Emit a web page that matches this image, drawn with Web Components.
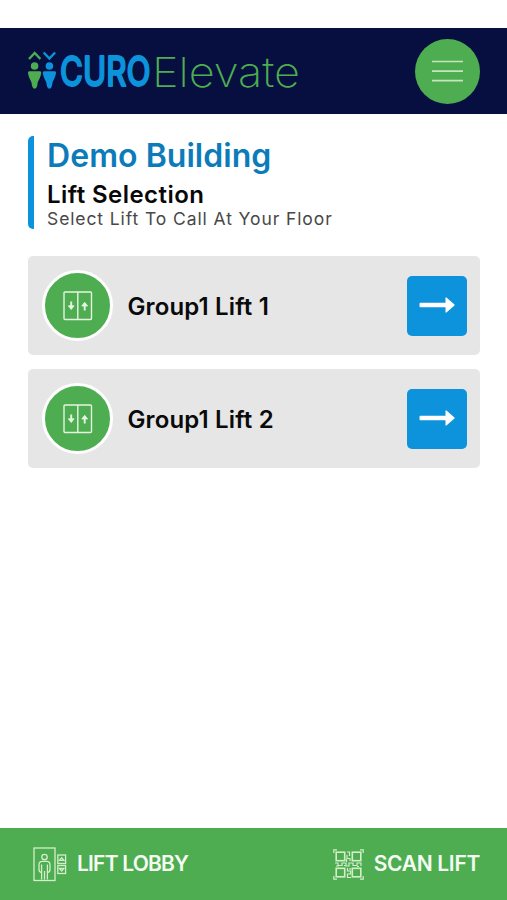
<!DOCTYPE html>
<html lang="en">
<head>
<meta charset="utf-8">
<title>CUROElevate</title>
<style>
  :root {
    --navy: #060f3f;
    --green: #4dad50;
    --blue: #0c93dc;
    --card: #e6e6e6;
  }
  body {
    margin: 0;
    background: #fff;
    font-family: Inter, "Liberation Sans", sans-serif;
  }
</style>
</head>
<body>
<lift-app></lift-app>
<script>
class BrandLogo extends HTMLElement {
    constructor() {
        super();
        this.attachShadow({ mode: 'open' });
        this.shadowRoot.innerHTML = `
        <style>
          :host { display: block; width: 274px; height: 66px; }
          svg { display: block; overflow: visible; }
          .curo { font: 500 41px Inter, sans-serif; fill: var(--blue); stroke: var(--blue); stroke-width: 1.8; stroke-linejoin: round; }
          .elevate { font: 200 41px Inter, sans-serif; fill: var(--green); }
        </style>
        <svg width="274" height="66" viewBox="28 38 274 66">
          <g fill="none" stroke-width="2.4">
            <path d="M29 59l5.7-6 5.7 6" stroke="#4dad50"/>
            <path d="M43.7 52.5l5.7 6 5.7-6" stroke="#0c93dc"/>
          </g>
          <g fill="#4dad50">
            <circle cx="34.6" cy="66" r="3.8"/>
            <path d="M29.2 71.2h10.8q1.5 0 1.2 1.8c-.5 4-2.3 6.5-3.5 9.5-.4 3.8-1.200 6.200-3.100 6.200s-2.700-2.400-3.100-6.200c-1.200-3-3-5.500-3.500-9.500q-.3-1.800 1.200-1.800z"/>
          </g>
          <g fill="#0c93dc">
            <circle cx="49.4" cy="66" r="3.8"/>
            <path d="M44 71.2h10.8q1.5 0 1.2 1.8c-.5 4-2.3 6.5-3.5 9.5-.4 3.8-1.200 6.200-3.100 6.200s-2.700-2.400-3.100-6.200c-1.200-3-3-5.500-3.500-9.500q-.3-1.800 1.200-1.800z"/>
          </g>
          <text class="curo" transform="translate(60 86) scale(.765 1)">CURO</text>
          <text class="elevate" x="152" y="86.500" textLength="148" lengthAdjust="spacingAndGlyphs">Elevate</text>
        </svg>
        `;
    }
}
customElements.define('brand-logo', BrandLogo);

class AppHeader extends HTMLElement {
    constructor() {
        super();
        this.attachShadow({ mode: 'open' });
        this.shadowRoot.innerHTML = `
        <style>
          :host {
            display: flex;
            align-items: center;
            justify-content: space-between;
            box-sizing: border-box;
            height: 86px;
            margin-top: 28px;
            padding: 0 27px 0 28px;
            background: var(--navy);
          }
          button {
            display: flex;
            align-items: center;
            justify-content: center;
            width: 65px;
            height: 65px;
            padding: 0;
            border: 0;
            border-radius: 50%;
            background: var(--green);
          }
        </style>
        <slot></slot>
        <button aria-label="Menu">
          <svg width="31" height="24" viewBox="0 0 31 24" stroke="#c5e6bd" stroke-width="1.700">
            <path d="M0 2.500h31M0 12.100h31M0 21.700h31"/>
          </svg>
        </button>
        `;
    }
}
customElements.define('app-header', AppHeader);

class PageHeading extends HTMLElement {
    constructor() {
        super();
        this.attachShadow({ mode: 'open' });
        this.shadowRoot.innerHTML = `
        <style>
          :host { display: flex; gap: 13.5px; height: 93px; margin: 22px 27px 0 28px; }
          .bar { width: 5.5px; border-radius: 5px 0 0 5px; background: var(--blue); }
          .text { white-space: nowrap; }
          h1, h2, p { margin: 0; }
          h1 { font-size: 32px; line-height: 39px; font-weight: 600; letter-spacing: .05px; color: #0b7cb9; }
          h2 { margin-top: 6px; font-size: 24px; line-height: 28px; font-weight: 600; letter-spacing: .45px; color: #080808; }
          p { font-size: 17.5px; line-height: 20px; letter-spacing: .9px; color: #484848; }
        </style>
        <div class="bar"></div>
        <div class="text">
          <h1><slot name="title"></slot></h1>
          <h2><slot name="subtitle"></slot></h2>
          <p><slot name="hint"></slot></p>
        </div>
        `;
    }
}
customElements.define('page-heading', PageHeading);

class LiftCard extends HTMLElement {
    constructor() {
        super();
        this.attachShadow({ mode: 'open' });
        this.shadowRoot.innerHTML = `
        <style>
          :host {
            display: flex;
            align-items: center;
            box-sizing: border-box;
            height: 99px;
            padding: 0 13.5px 0 14.4px;
            border-radius: 5px;
            background: var(--card);
          }
          .icon {
            display: flex;
            align-items: center;
            justify-content: center;
            box-sizing: border-box;
            width: 71px;
            height: 71px;
            border: 3px solid #fff;
            border-radius: 50%;
            background: var(--green);
          }
          .name {
            flex: 1;
            margin-left: 14px;
            padding-top: 2px;
            font-size: 24px;
            font-weight: 600;
            letter-spacing: .15px;
            white-space: nowrap;
            color: #0a0a0a;
          }
          button {
            display: flex;
            align-items: center;
            justify-content: center;
            width: 60px;
            height: 60px;
            padding: 0 0 2px;
            border: 0;
            border-radius: 5px;
            background: var(--blue);
          }
        </style>
        <div class="icon">
          <svg width="30" height="30" viewBox="0 0 30 30" fill="none" stroke="#e6f5e2" stroke-width="1.400">
            <rect x="1" y="1" width="27.500" height="27.500" rx="1"/>
            <path d="M14.800 1v27.500"/>
            <path d="M8.200 10.500v7M21.700 19.500v-7" stroke-width="1.900"/>
            <path d="M5.300 14.800l2.900 3.700 2.900-3.700zM18.800 15l2.900-3.700 2.900 3.700z" fill="#e6f5e2" stroke-width=".8"/>
          </svg>
        </div>
        <div class="name"><slot></slot></div>
        <button aria-label="Call lift">
          <svg width="36" height="16" viewBox="0 0 36 16" fill="#fff">
            <path d="M1.500 5.800H26.500V1.200q0-1.500 1.200-.5l7.500 6.500q.9.800 0 1.600l-7.500 6.500q-1.200 1-1.200-.5V10.200H1.500q-1 0-1-1V6.800q0-1 1-1z"/>
          </svg>
        </button>
        `;
    }
}
customElements.define('lift-card', LiftCard);

class FooterAction extends HTMLElement {
    constructor() {
        super();
        this.attachShadow({ mode: 'open' });
        this.shadowRoot.innerHTML = `
        <style>
          :host {
            display: flex;
            align-items: center;
            gap: 10px;
            padding-bottom: 2px;
            color: #f4fbf2;
            font-size: 21px;
            font-weight: 600;
            letter-spacing: var(--label-spacing, 0);
            white-space: nowrap;
          }
          .icon { display: flex; padding-top: 2px; }
        </style>
        <span class="icon"><slot name="icon"></slot></span>
        <slot></slot>
        `;
    }
}
customElements.define('footer-action', FooterAction);

class LobbyIcon extends HTMLElement {
    constructor() {
        super();
        this.attachShadow({ mode: 'open' });
        this.shadowRoot.innerHTML = `
        <style>:host, svg { display: block; }</style>
        <svg width="34" height="35" viewBox="0 0 34 35" fill="none" stroke="#d4eecb" stroke-width="1.300">
          <rect x="1" y="1" width="21" height="32.500"/>
          <circle cx="11.500" cy="10" r="2.700"/>
          <path d="M8.600 32.500V17.500M14.400 32.500V17.500M11.500 24v8.500M8.600 25.500q-2.600-.3-2.600-3v-5q0-3.200 3.300-3.200h4.400q3.300 0 3.300 3.200v5q0 2.700-2.600 3"/>
          <rect x="24.800" y="8" width="7.800" height="8.500"/>
          <rect x="24.800" y="18.500" width="7.800" height="8"/>
          <path d="M26.500 13.300l2.200-2.500 2.200 2.500zM26.500 21.500l2.200 2.500 2.200-2.500z"/>
        </svg>
        `;
    }
}
customElements.define('lobby-icon', LobbyIcon);

class QrIcon extends HTMLElement {
    constructor() {
        super();
        this.attachShadow({ mode: 'open' });
        this.shadowRoot.innerHTML = `
        <style>:host, svg { display: block; }</style>
        <svg width="31" height="31" viewBox="0 0 31 31" fill="none" stroke="#d4eecb" stroke-width="1.200">
          <path d="M.8 4V.8H4M27 .8h3.200V4M.8 27v3.200H4M27 30.200h3.200V27"/>
          <g stroke-width="1.600">
            <rect x="3.200" y="3.200" width="8.500" height="8.500"/>
            <rect x="19.300" y="3.200" width="8.500" height="8.500"/>
            <rect x="3.200" y="19.300" width="8.500" height="8.500"/>
            <rect x="19.300" y="19.300" width="8.500" height="8.500"/>
          </g>
          <path d="M14 3h3M16.500 3v4M14 6v3.500h3V12M2 14h3v2.500h4V14h4v3h3v-3h4v2.500h4V14h4v3M14.500 19v3h3v3h-3v3.500h3.500M17 19v2M3 17h3M24 17.500h2M13.500 10v3M11 16.500h2"/>
        </svg>
        `;
    }
}
customElements.define('qr-icon', QrIcon);

class LiftApp extends HTMLElement {
    constructor() {
        super();
        this.attachShadow({ mode: 'open' });
        this.shadowRoot.innerHTML = `
        <style>
          :host { display: flex; flex-direction: column; height: 900px; overflow: hidden; }
          main { flex: 1; }
          .lifts { display: grid; gap: 14px; margin: 27px 27px 0 28px; }
          footer {
            display: flex;
            justify-content: space-between;
            box-sizing: border-box;
            height: 72px;
            padding: 0 27px 0 33px;
            background: var(--green);
          }
          .lobby { --label-spacing: -.8px; }
          .scan { --label-spacing: -.3px; }
        </style>
        <app-header><brand-logo></brand-logo></app-header>
        <main>
          <page-heading>
            <span slot="title">Demo Building</span>
            <span slot="subtitle">Lift Selection</span>
            <span slot="hint">Select Lift To Call At Your Floor</span>
          </page-heading>
          <div class="lifts">
            <lift-card>Group1 Lift 1</lift-card>
            <lift-card>Group1 Lift 2</lift-card>
          </div>
        </main>
        <footer>
          <footer-action class="lobby"><lobby-icon slot="icon"></lobby-icon>LIFT LOBBY</footer-action>
          <footer-action class="scan"><qr-icon slot="icon"></qr-icon>SCAN LIFT</footer-action>
        </footer>
        `;
    }
}
customElements.define('lift-app', LiftApp);
</script>
</body>
</html>
